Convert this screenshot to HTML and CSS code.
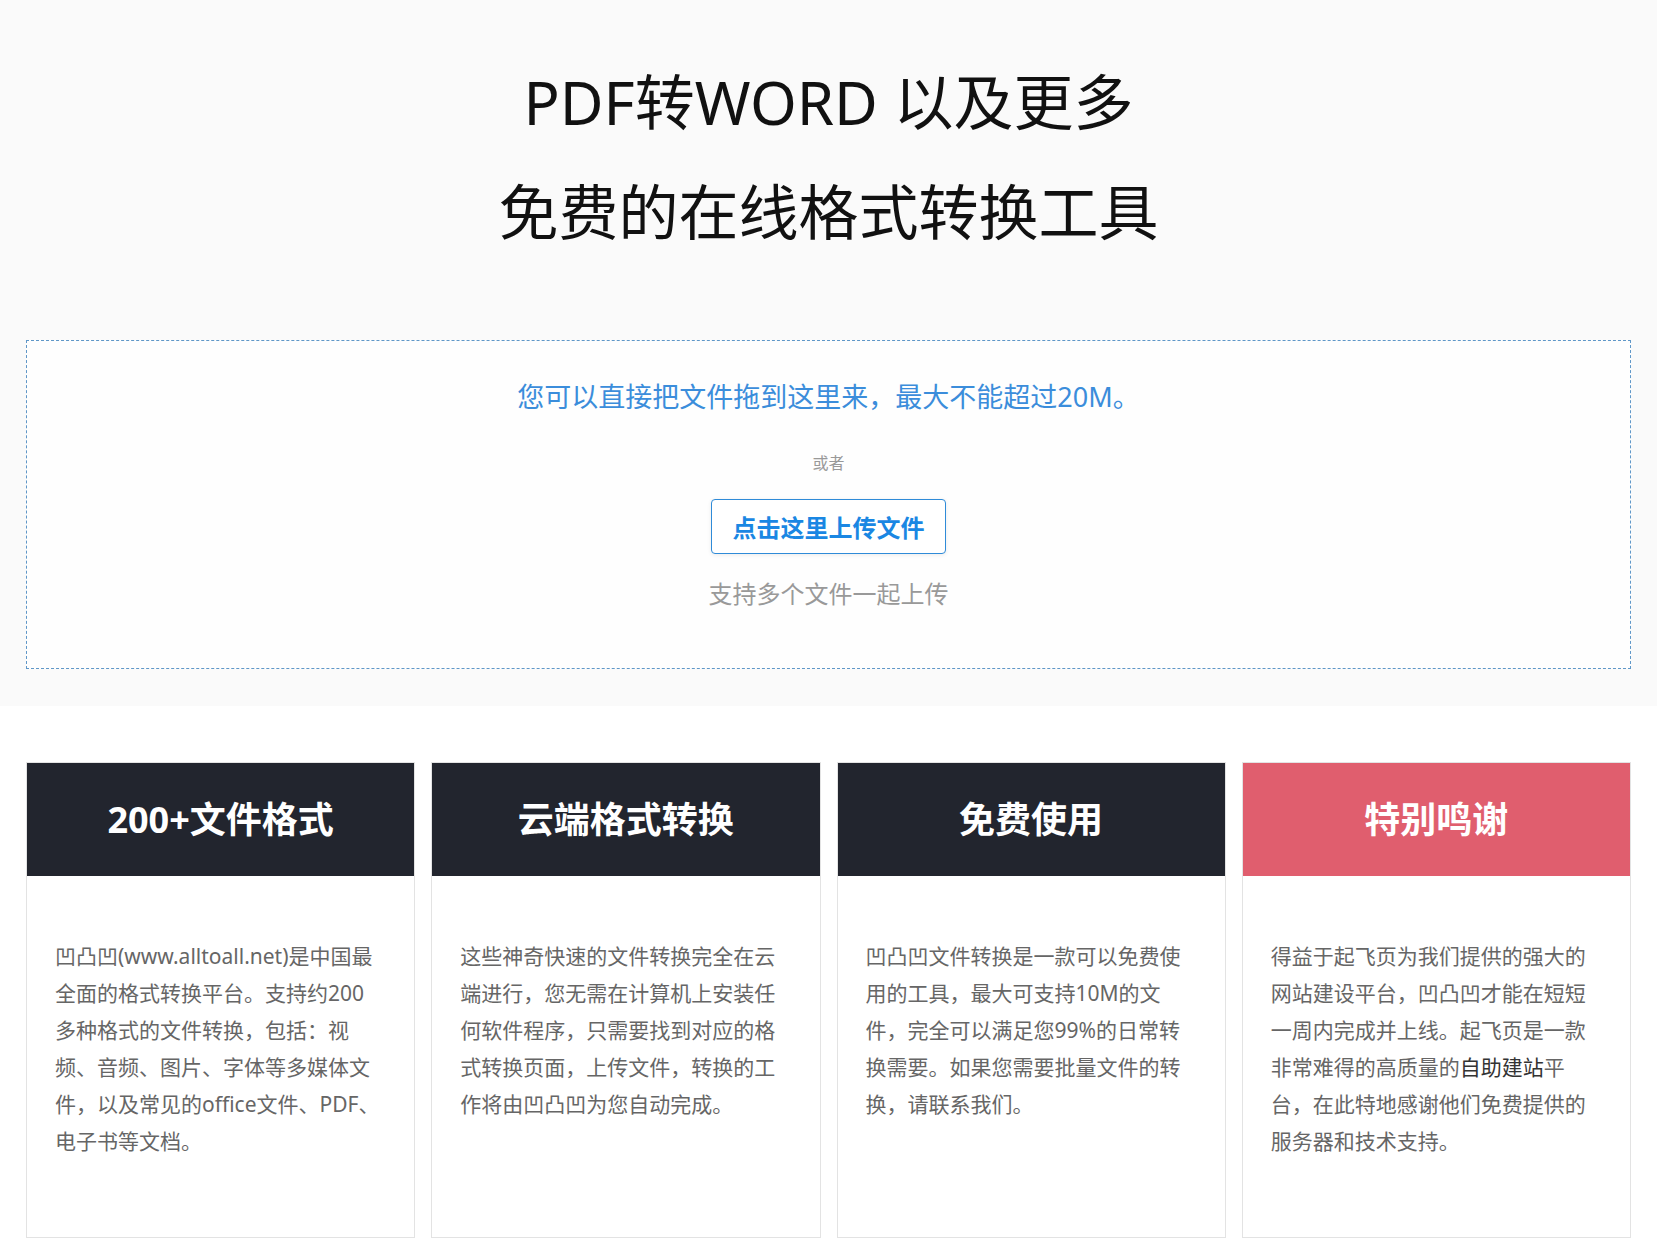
FILE: index.html
```html
<!DOCTYPE html>
<html lang="zh-CN">
<head>
<meta charset="utf-8">
<title>PDF转WORD 以及更多</title>
<link rel="stylesheet" href="styles.css">
</head>
<body>
<section class="hero">
  <h1 class="hero-title">PDF转WORD 以及更多<br>免费的在线格式转换工具</h1>
  <div class="drop">
    <p class="drop-tip">您可以直接把文件拖到这里来，最大不能超过20M。</p>
    <p class="drop-or">或者</p>
    <button class="drop-btn" type="button">点击这里上传文件</button>
    <p class="drop-note">支持多个文件一起上传</p>
  </div>
</section>
<section class="features">
  <div class="card">
    <h2 class="card-head">200+文件格式</h2>
    <p class="card-body">凹凸凹(www.alltoall.net)是中国最<br>全面的格式转换平台。支持约200<br>多种格式的文件转换，包括：视<br>频、音频、图片、字体等多媒体文<br>件，以及常见的office文件、PDF、<br>电子书等文档。</p>
  </div>
  <div class="card">
    <h2 class="card-head">云端格式转换</h2>
    <p class="card-body">这些神奇快速的文件转换完全在云<br>端进行，您无需在计算机上安装任<br>何软件程序，只需要找到对应的格<br>式转换页面，上传文件，转换的工<br>作将由凹凸凹为您自动完成。</p>
  </div>
  <div class="card">
    <h2 class="card-head">免费使用</h2>
    <p class="card-body">凹凸凹文件转换是一款可以免费使<br>用的工具，最大可支持10M的文<br>件，完全可以满足您99%的日常转<br>换需要。如果您需要批量文件的转<br>换，请联系我们。</p>
  </div>
  <div class="card">
    <h2 class="card-head card-head-pink">特别鸣谢</h2>
    <p class="card-body">得益于起飞页为我们提供的强大的<br>网站建设平台，凹凸凹才能在短短<br>一周内完成并上线。起飞页是一款<br>非常难得的高质量的<a class="card-link" href="#">自助建站</a>平<br>台，在此特地感谢他们免费提供的<br>服务器和技术支持。</p>
  </div>
</section>
</body>
</html>
```

FILE: styles.css
```css
* { box-sizing: border-box; }

html, body {
  margin: 0;
  padding: 0;
  background: #ffffff;
}

body {
  font-family: "Noto Sans", "Noto Sans CJK SC", sans-serif;
  color: #333;
}

.hero {
  background: #fafafa;
  padding: 47px 26px 37px;
}

.hero-title {
  margin: 0 0 73px;
  text-align: center;
  font-size: 60px;
  line-height: 110px;
  font-weight: 400;
  color: #111;
}

.drop {
  border: 1px dashed #5f97c8;
  background: #fefefe;
  height: 329px;
  padding-top: 38px;
  display: flex;
  flex-direction: column;
  align-items: center;
}

.drop p { margin: 0; }

.drop-tip {
  font-size: 27px;
  line-height: 36px;
  color: #3b8ddb;
}

.drop-or {
  margin-top: 36px !important;
  font-size: 16px;
  line-height: 24px;
  color: #999;
}

.drop-btn {
  margin-top: 24px;
  height: 55px;
  width: 235px;
  padding: 0;
  border: 1px solid #2f8bd8;
  border-radius: 4px;
  background: #fff;
  box-shadow: 0 1px 4px rgba(0, 0, 0, 0.08);
  font-family: inherit;
  font-size: 24px;
  font-weight: 700;
  color: #1a87e3;
  cursor: pointer;
}

.drop-note {
  margin-top: 23px !important;
  font-size: 24px;
  line-height: 34px;
  color: #999;
}

.features {
  padding: 56px 26px 0;
  display: grid;
  grid-template-columns: repeat(4, 1fr);
  gap: 16px;
}

.card {
  border: 1px solid #e3e3e3;
  background: #fff;
}

.card-head {
  margin: 0;
  height: 113px;
  line-height: 113px;
  background: #22252e;
  color: #fff;
  text-align: center;
  font-size: 36px;
  font-weight: 700;
}

.card-head-pink { background: #e05e6e; }

.card-body {
  margin: 0;
  padding: 62px 28px 77px;
  font-size: 21px;
  line-height: 37px;
  color: #666;
  white-space: nowrap;
}

.card-link {
  color: #333;
  text-decoration: none;
}
```
